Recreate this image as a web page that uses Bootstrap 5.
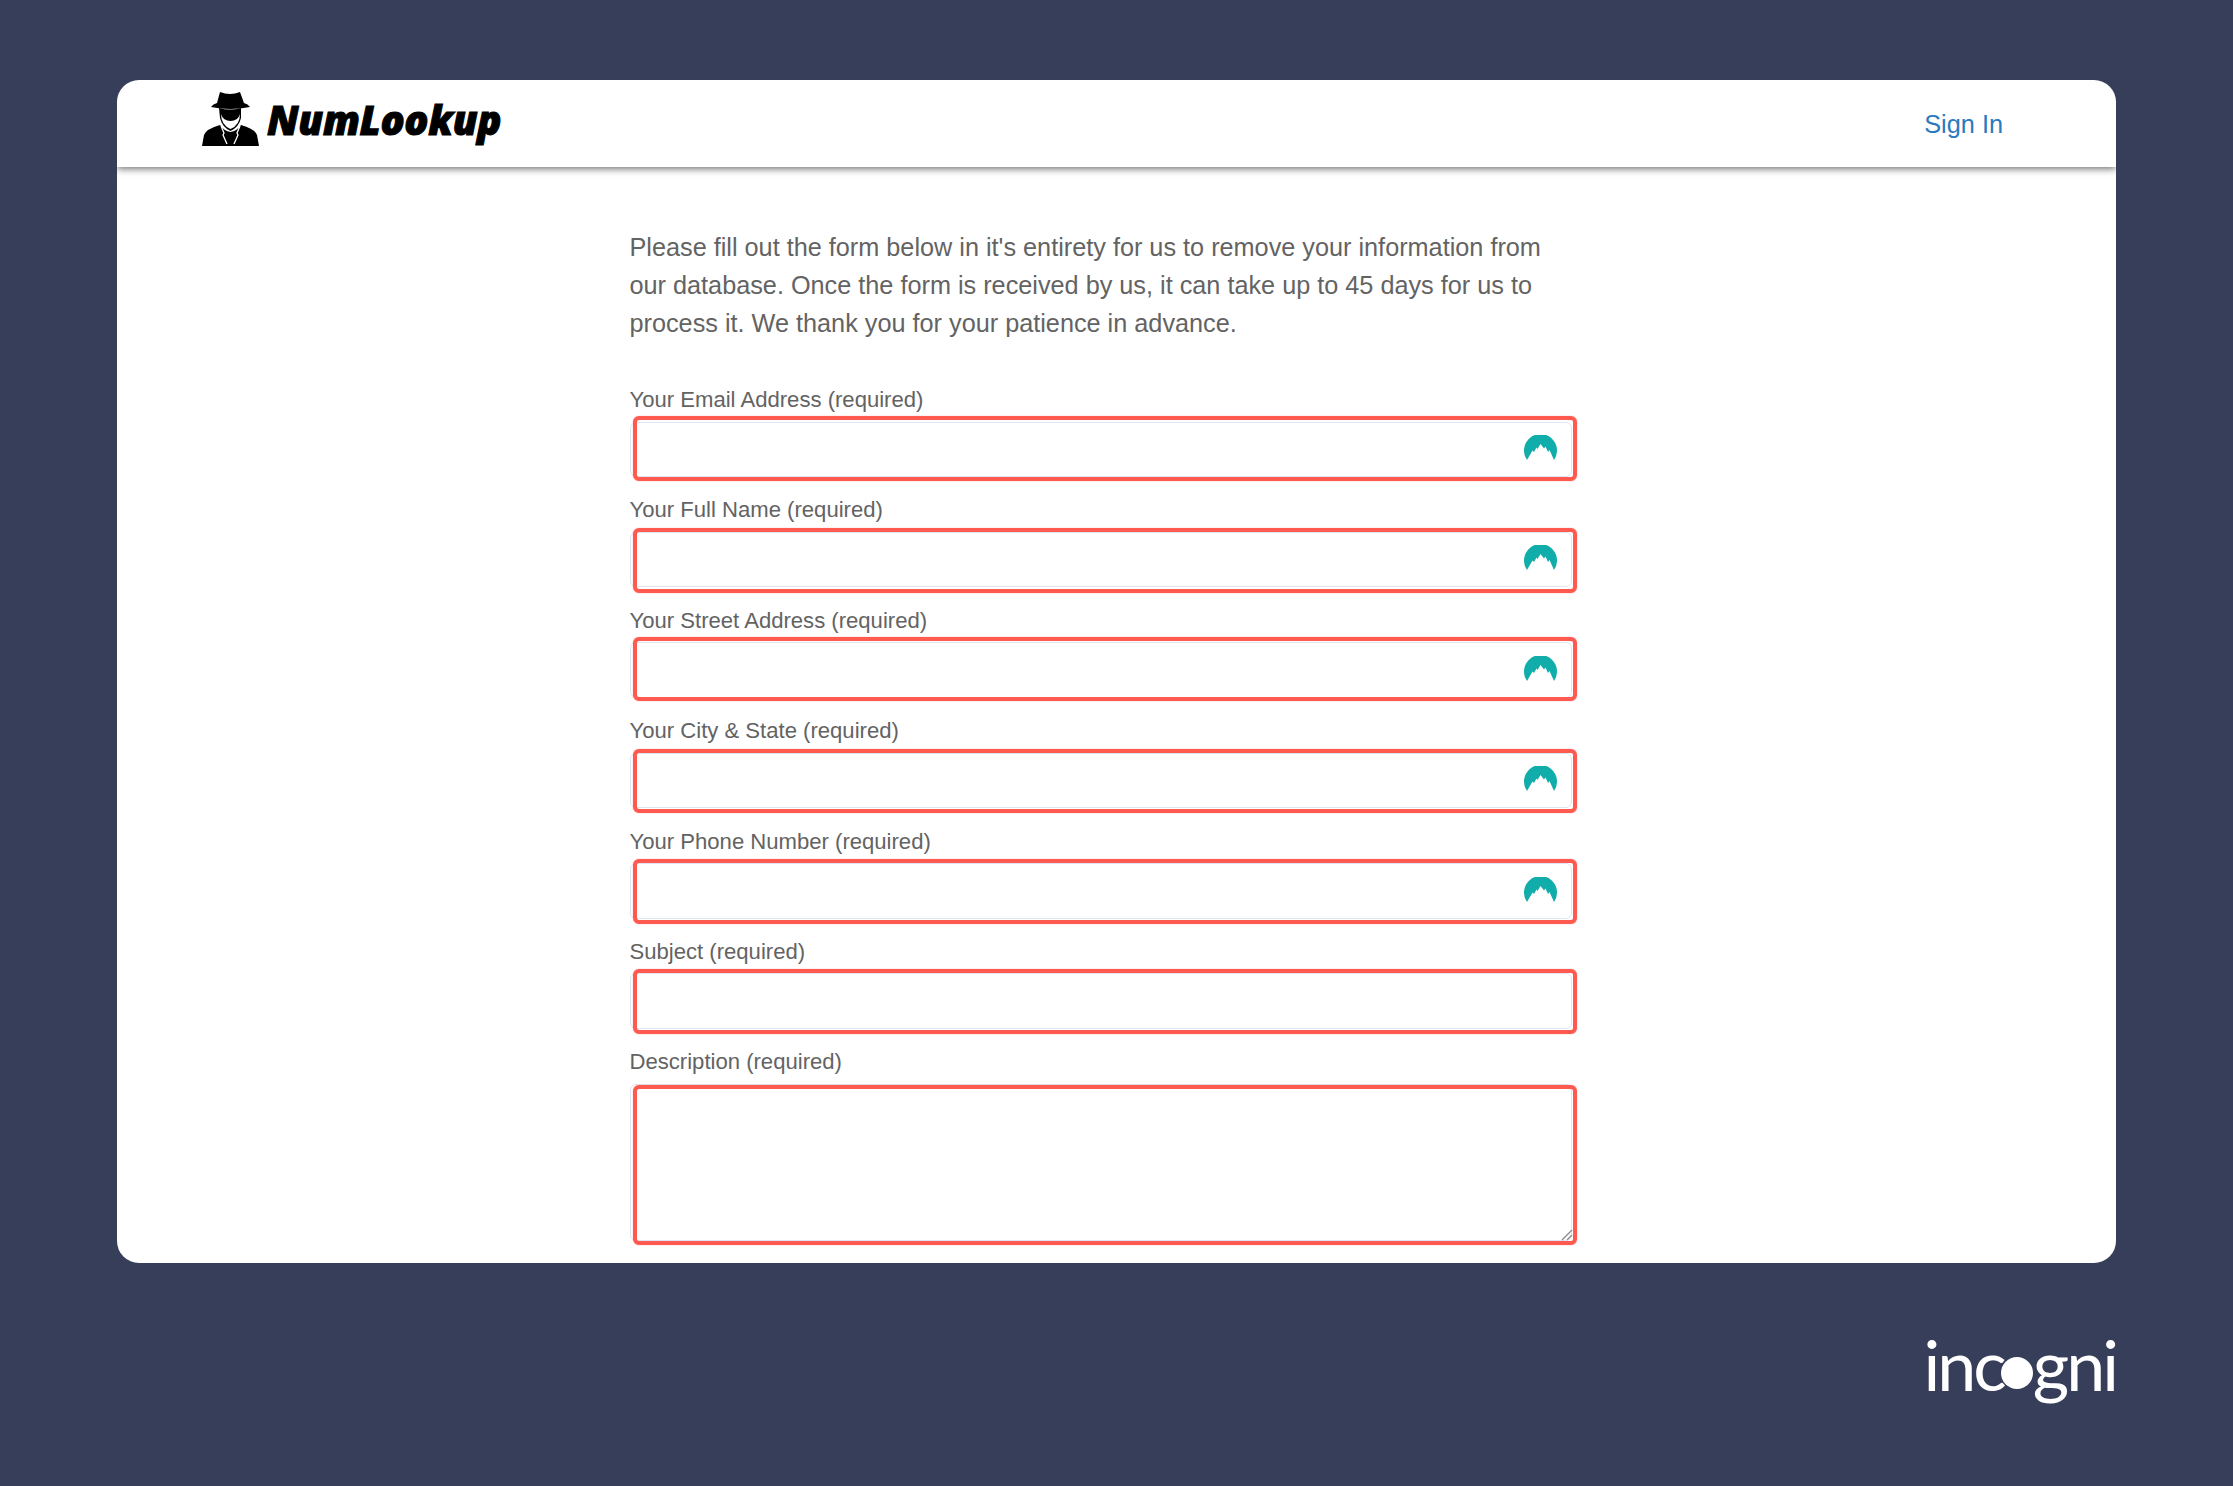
<!DOCTYPE html>
<html lang="en">
<head>
  <meta charset="UTF-8">
  <title>NumLookup removal form</title>
  <link href="https://cdn.jsdelivr.net/npm/bootstrap@5.3.3/dist/css/bootstrap.min.css" rel="stylesheet">
  <style>
    html, body { height: 1486px; overflow: hidden; }
    body {
      background: #373e5a;
      padding: 80px 117px 0;
      font-family: "Liberation Sans", Arial, sans-serif;
    }
    .sheet {
      height: 1183px;
      border-radius: 22px;
      overflow: hidden;
      background: #fff;
    }
    .topbar {
      height: 87px;
      padding: 0 113px 0 85px;
      box-shadow: 0 2px 7px rgba(0,0,0,.55);
      position: relative;
    }
    .brand-name {
      font-family: "Open Sans", sans-serif;
      font-weight: 800;
      font-style: italic;
      font-size: 40px;
      letter-spacing: -.3px;
      -webkit-text-stroke: 1px #000;
      color: #000;
      text-decoration: none;
      line-height: 1;
      margin-bottom: 8px;
    }
    .brand-name svg { margin-top: -3px; }
    .signin { color: #2a7ac0; font-size: 25.3px; text-decoration: none; margin-top: 2px; }
    .form-col { width: 942px; margin-left: 512.500px; color: #636363; }
    .intro { font-size: 25.25px; line-height: 38px; margin: 0; padding-top: 60.500px; padding-bottom: 45.500px; }
    .field-label { display: block; font-size: 22.1px; line-height: 26px; margin: 0 0 8.5px; }
    .field { position: relative; height: 55.5px; margin-bottom: 20.4px; }
    .field .form-control {
      height: 100%;
      border: 1px solid #dfe6f3;
      border-radius: 6px;
      box-shadow: none;
      background: transparent;
      resize: none;
    }
    .area-field { height: 157px; margin-bottom: 0; }
    /* red annotation boxes sit over the inputs, each drawn a little off */
    .red-mark {
      position: absolute;
      left: 3.500px;
      width: 944px;
      height: 64.5px;
      border: 4px solid #ff5a50;
      border-radius: 6px;
      box-shadow: 0 0 1px #ff5a50;
      pointer-events: none;
    }
    .mark-a { top: -5.5px; }
    .mark-b { top: -3.5px; }
    .mark-c { top: -5.5px; }
    .mark-d { top: -4px; }
    .mark-e { top: -4px; }
    .mark-f { top: -4px; }
    .mark-g { top: 1.500px; height: 160px; }
    .vpn-icon { position: absolute; right: 15px; top: 13.500px; width: 33px; height: 25px; }
    .grip-icon { position: absolute; right: -1px; bottom: 0; width: 12px; height: 12px; }
    .foot-logo {
      color: #fff;
      font-family: "Lato", sans-serif;
      font-weight: 400;
      font-size: 70px;
      line-height: 1;
      letter-spacing: -3px;
      margin-top: 66px;
    }
    .foot-dot {
      display: inline-block;
      width: 32px;
      height: 32px;
      margin: 0 0 0 -3px;
      vertical-align: 7px;
      border-radius: 50%;
      background: #fff;
      font-size: 30px;
      line-height: 30px;
      letter-spacing: 0;
      text-align: center;
    }
  </style>
</head>
<body>

  <svg width="0" height="0" class="d-block">
    <symbol id="vpn" viewBox="0 0 33 25">
      <path d="M3 25 A16.500 16.500 0 1 1 30 25 L25.500 15 L24 17 L21.500 11.500 L20 13.500 L16.500 9 L13.500 14 L12.500 12.500 L10 17 L8.500 15.500 Z" fill="#11adab"/>
    </symbol>
  </svg>

  <div class="sheet">
    <div class="topbar d-flex align-items-center justify-content-between">
      <a href="#" class="d-flex align-items-center gap-2 brand-name">
        <svg width="57" height="55" viewBox="0 0 57 55">
          <path d="M18 1 Q28 5 38 1 L42 12 Q46 13 48 16 Q28 20 9 16 Q11 13 15 12Z" fill="#000"/>
          <path d="M17 17 Q28 20 39 17 L39 27 Q37 36 28.500 40 Q20 36 18 27Z" fill="#000"/>
          <path d="M19 23 Q21 30 28.500 30 Q36 30 38 23 Q38 34 28.500 38 Q19 34 19 23Z" fill="#fff"/>
          <path d="M0 55 L2 44 Q4 38 18 34 Q22 40 28.500 41 Q35 40 39 34 Q53 38 55 44 L57 55Z" fill="#000"/>
          <path d="M19 35 L22 42 L21 44 L25 53 M38 35 L35 42 L36 44 L32 53" fill="none" stroke="#fff" stroke-width="1.300"/>
        </svg>
        <span>NumLookup</span>
      </a>
      <a href="#" class="signin">Sign In</a>
    </div>

    <form class="form-col">
      <p class="intro">Please fill out the form below in it's entirety for us to remove your information from our database. Once the form is received by us, it can take up to 45 days for us to process it. We thank you for your patience in advance.</p>

      <label class="field-label">Your Email Address (required)</label>
      <div class="field">
        <input type="text" class="form-control">
        <svg class="vpn-icon"><use href="#vpn"/></svg>
        <div class="red-mark mark-a"></div>
      </div>

      <label class="field-label">Your Full Name (required)</label>
      <div class="field">
        <input type="text" class="form-control">
        <svg class="vpn-icon"><use href="#vpn"/></svg>
        <div class="red-mark mark-b"></div>
      </div>

      <label class="field-label">Your Street Address (required)</label>
      <div class="field">
        <input type="text" class="form-control">
        <svg class="vpn-icon"><use href="#vpn"/></svg>
        <div class="red-mark mark-c"></div>
      </div>

      <label class="field-label">Your City &amp; State (required)</label>
      <div class="field">
        <input type="text" class="form-control">
        <svg class="vpn-icon"><use href="#vpn"/></svg>
        <div class="red-mark mark-d"></div>
      </div>

      <label class="field-label">Your Phone Number (required)</label>
      <div class="field">
        <input type="text" class="form-control">
        <svg class="vpn-icon"><use href="#vpn"/></svg>
        <div class="red-mark mark-e"></div>
      </div>

      <label class="field-label">Subject (required)</label>
      <div class="field">
        <input type="text" class="form-control">
        <div class="red-mark mark-f"></div>
      </div>

      <label class="field-label">Description (required)</label>
      <div class="field area-field">
        <textarea class="form-control"></textarea>
        <svg class="grip-icon" viewBox="0 0 12 12"><path d="M1 11 L11 1 M6 11 L11 6" stroke="#8a8a8a" stroke-width="1.300" fill="none"/></svg>
        <div class="red-mark mark-g"></div>
      </div>
    </form>
  </div>

  <div class="foot-logo text-end">inc<span class="foot-dot">o</span>gni</div>

  <script src="https://cdn.jsdelivr.net/npm/bootstrap@5.3.3/dist/js/bootstrap.bundle.min.js"></script>
</body>
</html>
